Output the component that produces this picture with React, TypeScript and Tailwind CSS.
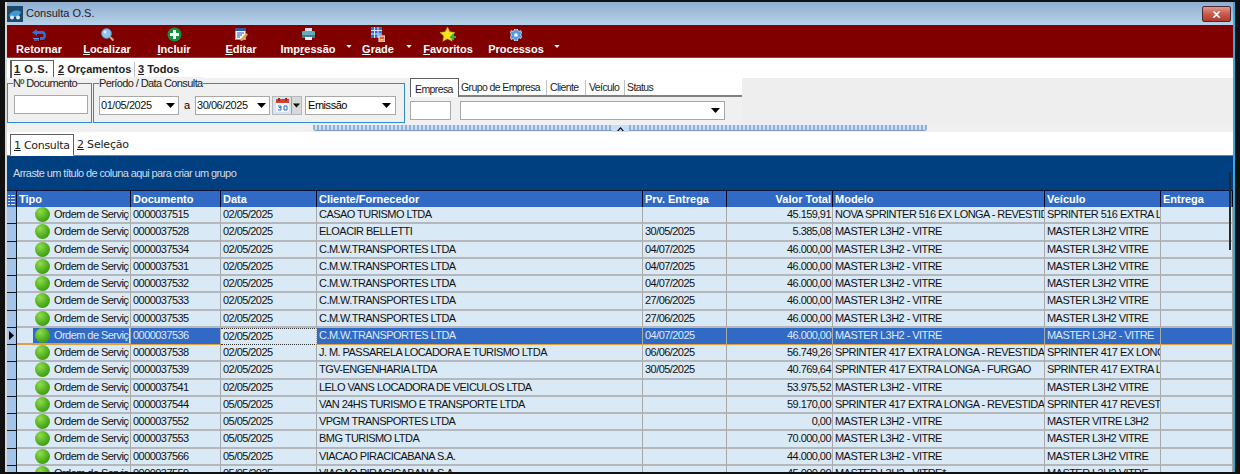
import React from 'react';

const ui = '"Liberation Sans", Arial, sans-serif';
const wide = '"DejaVu Sans", Verdana, sans-serif';

interface Row {
  doc: string;
  data: string;
  cliente: string;
  prv: string;
  valor: string;
  modelo: string;
  veiculo: string;
}

const cmw = 'C.M.W.TRANSPORTES LTDA';
const master = 'MASTER L3H2 - VITRE';
const vitre = 'MASTER L3H2 VITRE';

const rows: Row[] = [
  { doc: '0000037515', data: '02/05/2025', cliente: 'CASAO TURISMO LTDA', prv: '', valor: '45.159,91', modelo: 'NOVA SPRINTER 516 EX LONGA - REVESTIDA', veiculo: 'SPRINTER 516 EXTRA LONGA' },
  { doc: '0000037528', data: '02/05/2025', cliente: 'ELOACIR BELLETTI', prv: '30/05/2025', valor: '5.385,08', modelo: master, veiculo: vitre },
  { doc: '0000037534', data: '02/05/2025', cliente: cmw, prv: '04/07/2025', valor: '46.000,00', modelo: master, veiculo: vitre },
  { doc: '0000037531', data: '02/05/2025', cliente: cmw, prv: '04/07/2025', valor: '46.000,00', modelo: master, veiculo: vitre },
  { doc: '0000037532', data: '02/05/2025', cliente: cmw, prv: '04/07/2025', valor: '46.000,00', modelo: master, veiculo: vitre },
  { doc: '0000037533', data: '02/05/2025', cliente: cmw, prv: '27/06/2025', valor: '46.000,00', modelo: master, veiculo: vitre },
  { doc: '0000037535', data: '02/05/2025', cliente: cmw, prv: '27/06/2025', valor: '46.000,00', modelo: master, veiculo: vitre },
  { doc: '0000037536', data: '02/05/2025', cliente: cmw, prv: '04/07/2025', valor: '46.000,00', modelo: master, veiculo: master },
  { doc: '0000037538', data: '02/05/2025', cliente: 'J. M. PASSARELA LOCADORA E TURISMO LTDA', prv: '06/06/2025', valor: '56.749,26', modelo: 'SPRINTER 417 EXTRA LONGA - REVESTIDA/', veiculo: 'SPRINTER 417 EX LONGA' },
  { doc: '0000037539', data: '02/05/2025', cliente: 'TGV-ENGENHARIA LTDA', prv: '30/05/2025', valor: '40.769,64', modelo: 'SPRINTER 417 EXTRA LONGA - FURGAO', veiculo: 'SPRINTER 417 EXTRA LONGA' },
  { doc: '0000037541', data: '02/05/2025', cliente: 'LELO VANS LOCADORA DE VEICULOS LTDA', prv: '', valor: '53.975,52', modelo: master, veiculo: vitre },
  { doc: '0000037544', data: '05/05/2025', cliente: 'VAN 24HS TURISMO E TRANSPORTE LTDA', prv: '', valor: '59.170,00', modelo: 'SPRINTER 417 EXTRA LONGA - REVESTIDA/', veiculo: 'SPRINTER 417 REVESTIDA' },
  { doc: '0000037552', data: '05/05/2025', cliente: 'VPGM TRANSPORTES LTDA', prv: '', valor: '0,00', modelo: master, veiculo: 'MASTER VITRE L3H2' },
  { doc: '0000037553', data: '05/05/2025', cliente: 'BMG TURISMO LTDA', prv: '', valor: '70.000,00', modelo: master, veiculo: vitre },
  { doc: '0000037566', data: '05/05/2025', cliente: 'VIACAO PIRACICABANA S.A.', prv: '', valor: '44.000,00', modelo: master, veiculo: vitre },
  { doc: '0000037559', data: '05/05/2025', cliente: 'VIACAO PIRACICABANA S.A.', prv: '', valor: '45.000,00', modelo: 'MASTER L3H2 - VITRE*', veiculo: vitre },
];

const Caret = ({ className = '' }: { className?: string }) => (
  <svg width="9" height="5" viewBox="0 0 9 5" className={className}>
    <path d="M0 0h9L4.500 5z" fill="currentColor" />
  </svg>
);

const IconRetornar = () => (
  <svg width="14" height="12" viewBox="0 0 14 12">
    <path d="M5 0 0 3.500 5 7V5h5c1 0 1.500.5 1.500 1.500S11 8 10 8H8v3h2.500C12.500 11 14 9 14 6.500S12.500 2 10.500 2H5z" fill="#2f6fd0" />
    <path d="M1 9h6v1H1zM2 10.500h5v1H2z" fill="#5f9ae8" />
  </svg>
);

const IconLocalizar = () => (
  <svg width="13" height="13" viewBox="0 0 13 13">
    <circle cx="5.500" cy="5.500" r="4.800" fill="#8cc4ee" stroke="#5f9fd8" />
    <circle cx="4" cy="4" r="1.500" fill="#dcf0ff" />
    <path d="M9 9l3.500 3.500" stroke="#d8b06a" strokeWidth="2" />
  </svg>
);

const IconIncluir = () => (
  <svg width="15" height="15" viewBox="0 0 15 15">
    <circle cx="7.500" cy="7.500" r="7" fill="#12923a" />
    <path d="M6 3h3v3h3v3H9v3H6V9H3V6h3z" fill="#fff" />
  </svg>
);

const IconEditar = () => (
  <svg width="13" height="13" viewBox="0 0 13 13">
    <rect x=".5" y=".5" width="10" height="11" fill="#f4f6fa" stroke="#8aa0c0" />
    <rect x="0" y="0" width="11" height="3" fill="#2a5aa8" />
    <path d="M2 5h7M2 7h5M2 9h3" stroke="#2a5aa8" />
    <path d="m6 11 5-6 2 1.500-5 6-2.500.5z" fill="#e8a030" />
  </svg>
);

const IconImpressao = () => (
  <svg width="13" height="13" viewBox="0 0 13 13">
    <rect x="3" y="0" width="7" height="4" fill="#cfe0ea" />
    <rect x="0" y="3" width="13" height="7" rx="1" fill="#6aa8bc" />
    <rect x="0" y="7" width="13" height="3" fill="#3f7f96" />
    <rect x="3" y="9" width="7" height="3" fill="#e8f0f4" />
  </svg>
);

const IconGrade = () => (
  <svg width="14" height="15" viewBox="0 0 14 15">
    <rect x="0" y="0" width="11" height="11" fill="#2f6fd8" />
    <path d="M3.500 0v11M7 0v11M0 3.500h11M0 7h11" stroke="#cfe2fb" />
    <rect x="8" y="9" width="6" height="6" fill="#f05a28" stroke="#fff" />
    <rect x="9.500" y="12" width="3" height="1.500" fill="#fff" />
  </svg>
);

const IconFavoritos = () => (
  <svg width="16" height="15" viewBox="0 0 16 15">
    <path d="M7.500 0 9.800 4.800 15 5.500 11.200 9.100 12.200 14.300 7.500 11.800 2.800 14.300 3.800 9.100 0 5.500 5.200 4.800z" fill="#f2e21e" stroke="#c8a818" strokeWidth=".5" />
    <path d="M10 9h2V7h2v2h2v2h-2v2h-2v-2h-2z" fill="#3fae3a" />
  </svg>
);

const IconProcessos = () => (
  <svg width="12" height="12" viewBox="0 0 13 13">
    <path d="M5 0h3l.4 1.800 1.500.7L11.500 1.600 13 4l-1.300 1.200v1.600L13 8l-1.500 2.400-1.600-.9-1.500.7L8 13H5l-.4-1.800-1.500-.7-1.600.9L0 9l1.300-1.200V5.200L0 4l1.500-2.400 1.600.9 1.500-.7z" fill="#4f9be8" stroke="#e8f2fc" strokeWidth=".8" />
    <circle cx="6.500" cy="6.500" r="2" fill="#fff" />
  </svg>
);

const IconCalendar = () => (
  <svg width="13" height="14" viewBox="0 0 13 14">
    <rect x="0" y="1" width="13" height="13" fill="#f4f8fc" />
    <rect x="0" y="1" width="13" height="4" fill="#d8402c" />
    <rect x="2" y="0" width="2" height="3" fill="#a82818" />
    <rect x="9" y="0" width="2" height="3" fill="#a82818" />
    <path d="M2 8h3v1.500H3h2V12H2M8 8h3v4H8z" fill="none" stroke="#2f6fb8" strokeWidth="1" />
  </svg>
);

const Bullet = () => (
  <span className="block shrink-0 w-[15px] h-[15px] rounded-full bg-[radial-gradient(circle_at_35%_30%,#8fdc50,#4fae1c_55%,#2f8a10)]" />
);

const tools: { label: string; u: number; icon: React.ReactNode; box: string; caret?: string }[] = [
  { label: 'Retornar', u: -1, icon: <IconRetornar />, box: 'w-[62px]' },
  { label: 'Localizar', u: 0, icon: <IconLocalizar />, box: 'w-[64px] ml-[5px]' },
  { label: 'Incluir', u: 0, icon: <IconIncluir />, box: 'w-[64px] ml-[3px]' },
  { label: 'Editar', u: 0, icon: <IconEditar />, box: 'w-[64px] ml-[3px]' },
  { label: 'Impressão', u: 3, icon: <IconImpressao />, box: 'w-[64px] ml-[3px]', caret: 'ml-[6px]' },
  { label: 'Grade', u: 0, icon: <IconGrade />, box: 'w-[48px] ml-[2px]', caret: 'ml-[4px]' },
  { label: 'Favoritos', u: 0, icon: <IconFavoritos />, box: 'w-[64px] ml-[4px]' },
  { label: 'Processos', u: -1, icon: <IconProcessos />, box: 'w-[64px] ml-[4px]', caret: 'ml-[6px]' },
];

const Underlined = ({ text, u }: { text: string; u: number }) =>
  u < 0 ? (
    <>{text}</>
  ) : (
    <>
      {text.slice(0, u)}
      <span className="underline">{text[u]}</span>
      {text.slice(u + 1)}
    </>
  );

const Toolbar = () => (
  <div className="flex h-[33px] shrink-0 items-end bg-[#800000] border-b border-[#a04040] pb-[1px] pl-[1px]">
    {tools.map((t) => (
      <React.Fragment key={t.label}>
        <div className={`flex flex-col items-center shrink-0 ${t.box}`}>
          <div className="h-[17px] flex items-center">{t.icon}</div>
          <span className="text-white font-bold text-[11px] leading-[13px] whitespace-nowrap">
            <Underlined text={t.label} u={t.u} />
          </span>
        </div>
        {t.caret && <Caret className={`text-white w-[6px] h-[3px] mb-[8px] shrink-0 ${t.caret}`} />}
      </React.Fragment>
    ))}
  </div>
);

const Fieldset = ({ title, className, children }: { title: string; className: string; children: React.ReactNode }) => (
  <div className={`relative border border-[#2f8ad0] h-[40px] flex items-center shrink-0 ${className}`}>
    <span className="absolute -top-[7px] left-[5px] bg-[#f0f0f0] text-[11px] tracking-[-0.6px] leading-[12px] text-[#222] whitespace-nowrap">{title}</span>
    {children}
  </div>
);

const DateInput = ({ value, className }: { value: string; className: string }) => (
  <div className={`flex items-center justify-between h-[19px] bg-white border border-[#a8a8a8] pl-[1px] pr-[3px] text-[11px] tracking-[-0.45px] text-[#111] ${className}`}>
    <span>{value}</span>
    <Caret className="text-black" />
  </div>
);

const Filters = () => (
  <div className="flex h-[47px] shrink-0 bg-[#f0f0f0] pt-[5px]">
    <div className="flex gap-[1px]">
      <Fieldset title="Nº Documento" className="w-[85px] pl-[6px]">
        <div className="w-[74px] h-[19px] bg-white border border-[#a8a8a8] mt-[3px]" />
      </Fieldset>
      <Fieldset title="Período / Data Consulta" className="w-[312px] pl-[5px] pt-[4px]">
        <DateInput value="01/05/2025" className="w-[80px]" />
        <span className="w-[16px] text-center text-[11px]">a</span>
        <DateInput value="30/06/2025" className="w-[75px]" />
        <div className="flex ml-[2px] h-[19px] w-[30px] bg-[#d8d8d8] border border-[#b8b8b8]">
          <div className="w-[18px] flex items-center justify-center bg-[#d4e4f4]"><IconCalendar /></div>
          <div className="flex-1 flex items-center justify-center border-l border-[#a0a0a0]"><Caret className="text-black w-[7px]" /></div>
        </div>
        <div className="flex items-center justify-between ml-[3px] w-[91px] h-[19px] bg-white border border-[#a8a8a8] pl-[2px] pr-[4px] text-[11px] tracking-[-0.45px]">
          <span>Emissão</span>
          <Caret className="text-black" />
        </div>
      </Fieldset>
    </div>
    <div className="w-[332px] ml-[5px] -mt-[5px] shrink-0">
      <div className="flex items-end h-[19px] bg-white border-b-2 border-[#808080] text-[10.5px] tracking-[-0.6px] text-[#222] leading-[14px] whitespace-nowrap">
        <div className="relative top-[2px] h-[19px] w-[49px] pl-[4px] border-l border-t border-r border-[#606060] bg-white pt-[3px]">Empresa</div>
        <div className="w-[88px] pl-[2px] pb-[1px] border-r border-[#c0c0c0]">Grupo de Empresa</div>
        <div className="w-[39px] pl-[3px] pb-[1px] border-r border-[#c0c0c0]">Cliente</div>
        <div className="w-[39px] pl-[3px] pb-[1px] border-r border-[#c0c0c0]">Veículo</div>
        <div className="pl-[2px] pb-[1px]">Status</div>
      </div>
      <div className="flex gap-[9px] pt-[4px]">
        <div className="w-[41px] h-[19px] bg-white border border-[#a8a8a8]" />
        <div className="w-[265px] h-[19px] bg-white border border-[#a8a8a8] flex items-center justify-end pr-[4px]">
          <Caret className="text-black" />
        </div>
      </div>
    </div>
    <div className="flex-1 -mt-[5px] h-[47px] bg-[#eeeeee]" />
  </div>
);

const Splitter = () => (
  <div className="flex items-start h-[7px] shrink-0 bg-[#f0f0f0]">
    <div className="ml-[306px] w-[299px] h-[6px] rounded-bl-[3px] bg-[repeating-linear-gradient(90deg,#8fb0dc_0_2px,#cfe0f6_2px_4px)] border-b border-[#7f9cc0]" />
    <div className="w-[17px] h-[7px] bg-[#c8dcf4] flex items-center justify-center">
      <svg width="7" height="4" viewBox="0 0 7 4"><path d="M0 4 3.500 0 7 4H5.500L3.500 1.800 1.500 4z" fill="#000" /></svg>
    </div>
    <div className="w-[298px] h-[6px] rounded-br-[3px] bg-[repeating-linear-gradient(90deg,#8fb0dc_0_2px,#cfe0f6_2px_4px)] border-b border-[#7f9cc0]" />
  </div>
);

const columns = 'grid grid-cols-[10px_114px_90px_96px_326px_84px_106px_212px_116px_72px]';

const Header = () => (
  <div className={`${columns} h-[17px] shrink-0 bg-[#316ac5] text-white font-bold text-[11px] leading-[16px] border-t border-[#001030]`}>
    <div className="border-r border-[#000820] flex items-center justify-center">
      <svg width="7" height="11" viewBox="0 0 7 11">
        <path d="M0 1h2v1H0zM3 1h4v1H3zM0 4h2v1H0zM3 4h4v1H3zM0 7h2v1H0zM3 7h4v1H3zM0 10h2v1H0zM3 10h4v1H3z" fill="#d8e8fc" />
      </svg>
    </div>
    {['Tipo', 'Documento', 'Data', 'Cliente/Fornecedor', 'Prv. Entrega', 'Valor Total', 'Modelo', 'Veículo', 'Entrega'].map((h) => (
      <div key={h} className={`border-r border-[#000820] px-[2px] whitespace-nowrap overflow-hidden ${h === 'Valor Total' ? 'text-right pr-[1px]' : ''}`}>
        {h}
      </div>
    ))}
  </div>
);

const GridRow = ({ row, selected }: { row: Row; selected: boolean }) => {
  const cell = 'overflow-hidden whitespace-nowrap px-[2px] border-r border-[#a8a8a8]';
  return (
    <div className={`${columns} h-[17.25px] shrink-0 text-[11px] tracking-[-0.55px] leading-[15px] ${selected ? 'text-[#dde8f8]' : 'text-[#111] bg-[#d9e9f6]'}`}>
      <div className="bg-[#a4c4ec] border-r border-b border-[#101820] flex items-center justify-center">
        {selected && <svg width="5" height="9" viewBox="0 0 5 9"><path d="M0 0 5 4.500 0 9z" fill="#000" /></svg>}
      </div>
      <div className={`overflow-hidden flex items-center border-r border-b-2 border-[#a8a8a8] ${selected ? 'bg-[#d9e9f6] border-b-[#e0a040]' : 'border-b-[#b4b8bc]'}`}>
        <div className={`flex items-center h-full shrink-0 ml-[16px] pl-[2px] w-[96px] ${selected ? 'bg-[#316ac5] text-[#dde8f8]' : ''}`}>
          <Bullet />
          <span className="ml-[4px] whitespace-nowrap overflow-hidden">Ordem de Serviço</span>
        </div>
      </div>
      {[row.doc, row.data, row.cliente, row.prv, row.valor, row.modelo, row.veiculo, ''].map((v, i) => (
        <div
          key={i}
          className={`${cell} ${i === 4 ? 'text-right pr-[1px]' : ''} ${selected ? (i === 1 ? 'bg-[#d9e9f6] text-[#111] border-y border-dotted border-y-[#303030]' : 'bg-[#316ac5] border-b border-b-[#e0a040]') : 'border-b-2 border-b-[#b4b8bc]'}`}
        >
          {v}
        </div>
      ))}
    </div>
  );
};

export default function App() {
  return (
    <div className="w-[1240px] h-[474px] overflow-hidden bg-[#101010] pt-[2px] pb-[2px] pl-[5px] pr-[5px]" style={{ fontFamily: ui }}>
      <div className="relative flex flex-col h-full bg-white border-l-2 border-r-2 border-l-[#d8d8d8] border-r-[#38a8d8] overflow-hidden">
        <div className="flex items-center h-[23px] shrink-0 bg-gradient-to-b from-[#8fadd0] to-[#b8d2ea] pr-[2px]">
          <div className="w-[16px] h-[16px] bg-[#1d4a6c] flex items-center justify-center">
            <svg width="14" height="12" viewBox="0 0 14 12">
              <path d="M1 7c2-4 8-6 12-3-1 3-3 5-7 5S1 9 1 7z" fill="#3f9ad0" />
              <circle cx="4" cy="9.500" r="2" fill="#e0e8f0" />
              <circle cx="10" cy="9.500" r="2" fill="#e0e8f0" />
            </svg>
          </div>
          <span className="ml-[3px] text-[11px] text-[#222]">Consulta O.S.</span>
          <div className="ml-auto w-[29px] h-[16px] mt-[1px] rounded-[2px] border border-[#4a2a30] bg-gradient-to-b from-[#e0988c] via-[#c85a4c] to-[#b03a2c] flex items-center justify-center">
            <svg width="11" height="9" viewBox="0 0 11 9">
              <path d="M1 1h2.500l2 2 2-2H10L7 4.500 10 8H7.500l-2-2-2 2H1l3-3.500z" fill="#fff" stroke="#555" strokeWidth=".4" />
            </svg>
          </div>
        </div>
        <Toolbar />
        <div className="flex items-end h-[20px] shrink-0 bg-white pl-[3px] font-bold text-[11px] text-[#222] whitespace-nowrap">
          <div className="h-[18px] w-[44px] pl-[2px] border border-b-0 border-[#606060] border-l-2 leading-[17px] tracking-[0.6px]"><span className="underline">1</span> O.S.</div>
          <div className="h-[16px] pl-[4px] w-[81px] border-r border-[#c0c0c0] leading-[15px]"><span className="underline">2</span> Orçamentos</div>
          <div className="h-[16px] pl-[3px] leading-[15px]"><span className="underline">3</span> Todos</div>
        </div>
        <Filters />
        <Splitter />
        <div className="flex items-end h-[24px] shrink-0 bg-white border-b border-[#808080] pl-[3px] text-[11px] text-[#222]" style={{ fontFamily: wide }}>
          <div className="relative top-[1px] h-[22px] w-[64px] px-[3px] border border-[#606060] border-b-white bg-white leading-[21px] whitespace-nowrap tracking-[-0.3px]"><span className="underline">1</span> Consulta</div>
          <div className="h-[20px] pl-[3px] leading-[20px] whitespace-nowrap tracking-[-0.2px]"><span className="underline">2</span> Seleção</div>
        </div>
        <div className="flex items-center h-[34px] shrink-0 bg-[#003f80] pl-[6px] pt-[1px] text-[11px] tracking-[-0.6px] text-[#d0dcec]">
          Arraste um título de coluna aqui para criar um grupo
        </div>
        <Header />
        <div className="flex flex-col flex-1 min-h-0 overflow-hidden">
          {rows.map((r, i) => (
            <GridRow key={r.doc} row={r} selected={i === 7} />
          ))}
        </div>
        <div className="absolute left-[1222px] top-[170px] w-[2px] h-[78px] bg-[#202830]" />
      </div>
    </div>
  );
}
